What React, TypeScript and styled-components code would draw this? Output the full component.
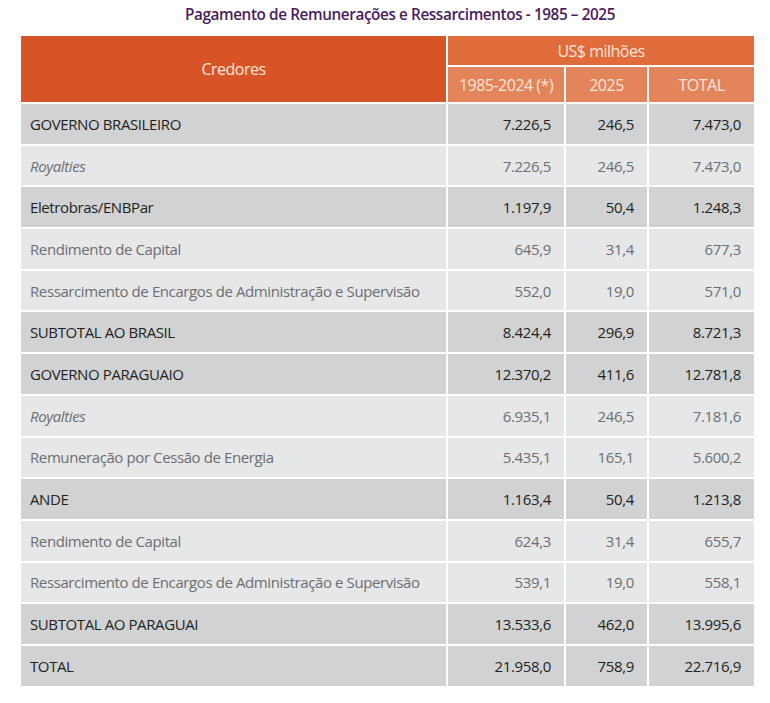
import React from 'react';
import styled, { createGlobalStyle } from 'styled-components';

const GlobalStyle = createGlobalStyle`
  html, body {
    margin: 0;
    padding: 0;
    background: #ffffff;
  }
  body {
    font-family: "Open Sans", "Liberation Sans", sans-serif;
  }
`;

const Page = styled.div`
  width: 770px;
  padding: 4px 0 0 19px;
  box-sizing: border-box;
`;

const Title = styled.h1`
  margin: 0 0 10px;
  width: 762px;
  text-align: center;
  font-size: 15.3px;
  font-weight: 600;
  letter-spacing: -0.4px;
  color: #4a1d5c;
  line-height: 20px;
`;

const Table = styled.table`
  width: 735px;
  border-collapse: collapse;
  table-layout: fixed;
`;

const HeadCell = styled.th<{ $tone: 'dark' | 'mid' | 'light'; $h: number }>`
  height: ${(p) => p.$h}px;
  padding: 0;
  border: 2px solid #ffffff;
  font-weight: 400;
  font-size: 16px;
  letter-spacing: -0.5px;
  color: #fbe6dc;
  text-align: center;
  background: ${(p) => (p.$tone === 'dark' ? '#d75427' : p.$tone === 'mid' ? '#e06c3b' : '#e4845a')};
`;

const Row = styled.tr<{ $main: boolean }>`
  background: ${(p) => (p.$main ? '#d1d2d4' : '#e6e7e8')};
  color: ${(p) => (p.$main ? '#231f20' : '#6d6e71')};
`;

const NameCell = styled.td<{ $italic: boolean }>`
  height: 39.7px;
  padding: 0 0 0 9px;
  border: 2px solid #ffffff;
  font-size: 15px;
  letter-spacing: -0.4px;
  font-style: ${(p) => (p.$italic ? 'italic' : 'normal')};
  white-space: nowrap;
`;

const NumCell = styled.td`
  padding: 0 13px 0 0;
  border: 2px solid #ffffff;
  font-size: 15px;
  letter-spacing: -0.35px;
  text-align: right;
`;

interface Line {
  name: string;
  a: string;
  b: string;
  c: string;
  main?: boolean;
  italic?: boolean;
}

const lines: Line[] = [
  { name: 'GOVERNO BRASILEIRO', a: '7.226,5', b: '246,5', c: '7.473,0', main: true },
  { name: 'Royalties', a: '7.226,5', b: '246,5', c: '7.473,0', italic: true },
  { name: 'Eletrobras/ENBPar', a: '1.197,9', b: '50,4', c: '1.248,3', main: true },
  { name: 'Rendimento de Capital', a: '645,9', b: '31,4', c: '677,3' },
  { name: 'Ressarcimento de Encargos de Administração e Supervisão', a: '552,0', b: '19,0', c: '571,0' },
  { name: 'SUBTOTAL AO BRASIL', a: '8.424,4', b: '296,9', c: '8.721,3', main: true },
  { name: 'GOVERNO PARAGUAIO', a: '12.370,2', b: '411,6', c: '12.781,8', main: true },
  { name: 'Royalties', a: '6.935,1', b: '246,5', c: '7.181,6', italic: true },
  { name: 'Remuneração por Cessão de Energia', a: '5.435,1', b: '165,1', c: '5.600,2' },
  { name: 'ANDE', a: '1.163,4', b: '50,4', c: '1.213,8', main: true },
  { name: 'Rendimento de Capital', a: '624,3', b: '31,4', c: '655,7' },
  { name: 'Ressarcimento de Encargos de Administração e Supervisão', a: '539,1', b: '19,0', c: '558,1' },
  { name: 'SUBTOTAL AO PARAGUAI', a: '13.533,6', b: '462,0', c: '13.995,6', main: true },
  { name: 'TOTAL', a: '21.958,0', b: '758,9', c: '22.716,9', main: true },
];

export default function App() {
  return (
    <Page>
      <GlobalStyle />
      <Title>Pagamento de Remunerações e Ressarcimentos - 1985 – 2025</Title>
      <Table>
        <colgroup>
          <col style={{ width: 427 }} />
          <col style={{ width: 118 }} />
          <col style={{ width: 83 }} />
          <col style={{ width: 107 }} />
        </colgroup>
        <thead>
          <tr>
            <HeadCell rowSpan={2} $tone="dark" $h={29}>Credores</HeadCell>
            <HeadCell colSpan={3} $tone="mid" $h={29}>US$ milhões</HeadCell>
          </tr>
          <tr>
            <HeadCell $tone="light" $h={35}>1985-2024 (*)</HeadCell>
            <HeadCell $tone="light" $h={35}>2025</HeadCell>
            <HeadCell $tone="light" $h={35}>TOTAL</HeadCell>
          </tr>
        </thead>
        <tbody>
          {lines.map((l, i) => (
            <Row key={i} $main={!!l.main}>
              <NameCell $italic={!!l.italic}>{l.name}</NameCell>
              <NumCell>{l.a}</NumCell>
              <NumCell>{l.b}</NumCell>
              <NumCell>{l.c}</NumCell>
            </Row>
          ))}
        </tbody>
      </Table>
    </Page>
  );
}
